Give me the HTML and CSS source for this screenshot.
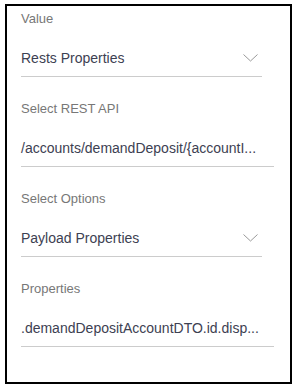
FILE: index.html
```html
<!DOCTYPE html>
<html lang="en">
<head>
    <meta charset="UTF-8">
    <meta name="viewport" content="width=device-width, initial-scale=1.0">
    <title>Rest Value Settings</title>
    <link rel="stylesheet" href="styles.css">
</head>
<body>
    <div class="panel">
        <!-- Value -->
        <div class="field">
            <label class="field-label">Value</label>
            <div class="select-box">
                <span class="select-text">Rests Properties</span>
                <svg class="chevron" width="15" height="8" viewBox="0 0 15 8">
                    <polyline points="0.5,0.5 7.5,7 14.5,0.5" fill="none" stroke="#999" stroke-width="1"/>
                </svg>
            </div>
        </div>

        <!-- REST API -->
        <div class="field">
            <label class="field-label">Select REST API</label>
            <div class="text-box" title="/accounts/demandDeposit/{accountId}">/accounts/demandDeposit/{accountI...</div>
        </div>

        <!-- Options -->
        <div class="field">
            <label class="field-label">Select Options</label>
            <div class="select-box">
                <span class="select-text">Payload Properties</span>
                <svg class="chevron" width="15" height="8" viewBox="0 0 15 8">
                    <polyline points="0.5,0.5 7.5,7 14.5,0.5" fill="none" stroke="#999" stroke-width="1"/>
                </svg>
            </div>
        </div>

        <!-- Properties -->
        <div class="field">
            <label class="field-label">Properties</label>
            <div class="text-box" title=".demandDepositAccountDTO.id.displayValue">.demandDepositAccountDTO.id.disp...</div>
        </div>
    </div>
</body>
</html>
```

FILE: styles.css
```css
/* Panel styles */

body {
    font-family: "Liberation Sans", Arial, sans-serif;
    background-color: #fff;
    margin: 0;
    padding: 4px 0 0 5px;
}

.panel {
    box-sizing: border-box;
    width: 287px;
    height: 380px;
    border: 2px solid #000;
    padding: 5px 0 0 14px;
}

.field {
    margin-bottom: 24px;
}

.field-label {
    display: block;
    font-size: 13px;
    line-height: 16px;
    color: #777;
    margin-bottom: 14px;
}

.select-box {
    width: 241px;
    display: flex;
    align-items: center;
    justify-content: space-between;
    padding: 8px 4px 9px 0;
    box-sizing: border-box;
    border-bottom: 1px solid #ccc;
}

.select-text,
.text-box {
    font-size: 14px;
    line-height: 18px;
    color: #3d4152;
}

.chevron {
    display: block;
}

.text-box {
    width: 253px;
    box-sizing: border-box;
    padding: 8px 0 9px 0;
    border-bottom: 1px solid #ccc;
    white-space: nowrap;
}
```
